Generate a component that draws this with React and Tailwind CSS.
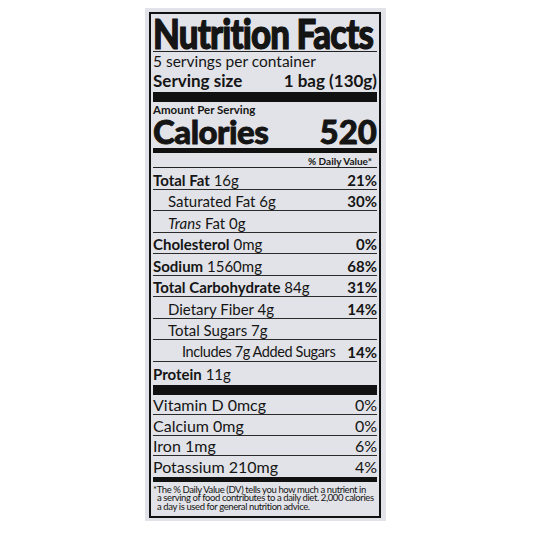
const nutrients = [
  { name: 'Total Fat', amount: '16g', dv: '21%', bold: true },
  { name: 'Saturated Fat', amount: '6g', dv: '30%', indent: 1 },
  { name: 'Trans', italic: true, rest: 'Fat 0g', indent: 1 },
  { name: 'Cholesterol', amount: '0mg', dv: '0%', bold: true },
  { name: 'Sodium', amount: '1560mg', dv: '68%', bold: true },
  { name: 'Total Carbohydrate', amount: '84g', dv: '31%', bold: true },
  { name: 'Dietary Fiber', amount: '4g', dv: '14%', indent: 1 },
  { name: 'Total Sugars', amount: '7g', indent: 1 },
  { name: 'Includes 7g Added Sugars', dv: '14%', indent: 2 },
];

const vitamins = [
  { name: 'Vitamin D 0mcg', dv: '0%' },
  { name: 'Calcium 0mg', dv: '0%' },
  { name: 'Iron 1mg', dv: '6%' },
  { name: 'Potassium 210mg', dv: '4%' },
];

const NutrientRow = ({ item }) => {
  const pad = item.indent === 2 ? 'pl-[29px]' : item.indent === 1 ? 'pl-[15px]' : 'pl-0';
  return (
    <div className={`flex h-[21.5px] items-center justify-between whitespace-nowrap border-b border-[#2a2a2a] pt-[4px] text-[15px] ${pad}`}>
      <span className={item.indent === 2 ? 'text-[14.5px] tracking-[-0.4px]' : ''}>
        {item.italic ? (
          <>
            <span className="italic">{item.name}</span> {item.rest}
          </>
        ) : (
          <>
            <span className={item.bold ? 'font-bold' : ''}>{item.name}</span>
            {item.amount && <> {item.amount}</>}
          </>
        )}
      </span>
      {item.dv && <span className="font-bold">{item.dv}</span>}
    </div>
  );
};

export default function App() {
  return (
    <div className="min-h-screen bg-white pt-2" style={{ fontFamily: 'Lato, "Open Sans", sans-serif' }}>
      <div className="ml-[145px] w-[241px] bg-[#e2e3e8] pt-1 pb-[3px] pl-1 pr-[5px]">
        <div className="border-2 border-[#111] px-[2px] text-[#151515] leading-none">
          {/* Title */}
          <div className="flex h-[38px] items-center border-b border-[#222] pt-[2px]">
            <h1 className="origin-left scale-x-[0.85] whitespace-nowrap text-[41px] font-black tracking-[-1px] [-webkit-text-stroke:1.2px_#111]">
              Nutrition Facts
            </h1>
          </div>
          <div className="flex h-[17px] items-center pt-[2px] text-[15.5px]">5 servings per container</div>
          <div className="flex h-[23px] items-center justify-between text-[17px] font-bold">
            <span>Serving size</span>
            <span>1 bag (130g)</span>
          </div>
          <div className="h-[10px] bg-[#111]" />

          {/* Calories */}
          <div className="flex h-[13px] items-end text-[11.5px] font-bold">Amount Per Serving</div>
          <div className="flex h-[33px] items-center justify-between font-black">
            <span className="text-[33px] tracking-[-0.5px] [-webkit-text-stroke:0.8px_#111]">Calories</span>
            <span className="text-[33px] [-webkit-text-stroke:0.8px_#111]">520</span>
          </div>
          <div className="h-[5px] bg-[#111]" />
          <div className="flex h-[15px] items-center justify-end border-b border-[#222] pt-[2px] pr-[5px] text-[10px] font-bold">
            % Daily Value*
          </div>

          {nutrients.map((item) => (
            <NutrientRow key={item.name} item={item} />
          ))}
          <div className="flex h-[23px] items-center pt-[3px] text-[15px]">
            <span className="font-bold">Protein</span>&nbsp;11g
          </div>
          <div className="h-[10px] bg-[#111]" />

          {/* Vitamins & minerals */}
          {vitamins.map((v, i) => (
            <div
              key={v.name}
              className={`flex h-[20.5px] items-center justify-between pt-[2px] text-[16px] ${i < vitamins.length - 1 ? 'border-b border-[#2a2a2a]' : ''}`}
            >
              <span>{v.name}</span>
              <span>{v.dv}</span>
            </div>
          ))}
          <div className="h-[5px] bg-[#111]" />

          {/* Footnote */}
          <div className="whitespace-nowrap pt-[4px] pb-[5px] text-[9.5px] leading-[8.5px] tracking-[-0.4px]">
            <p>*The % Daily Value (DV) tells you how much a nutrient in</p>
            <p className="pl-[4px]">a serving of food contributes to a daily diet. 2,000 calories</p>
            <p className="pl-[4px]">a day is used for general nutrition advice.</p>
          </div>
        </div>
      </div>
    </div>
  );
}
